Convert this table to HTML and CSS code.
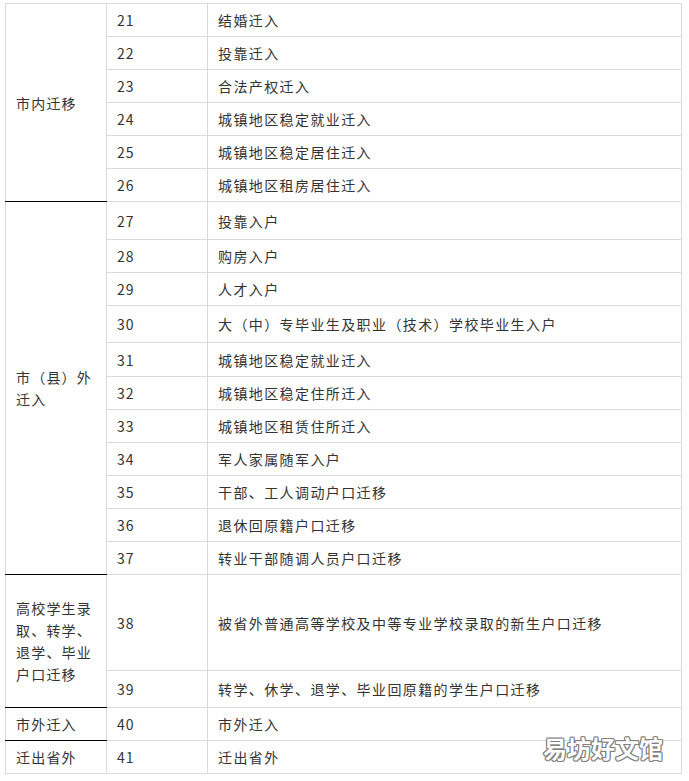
FILE: index.html
```
<!DOCTYPE html>
<html lang="zh">
<head>
<meta charset="utf-8">
<link rel="stylesheet" href="styles.css">
</head>
<body>
<div class="wrap">
<table class="tbl">
<colgroup><col class="c1"><col class="c2"><col class="c3"></colgroup>
<tr class="h33"><td class="cat grp" rowspan="6">市内迁移</td><td class="num">21</td><td>结婚迁入</td></tr>
<tr class="h33"><td class="num">22</td><td>投靠迁入</td></tr>
<tr class="h33"><td class="num">23</td><td>合法产权迁入</td></tr>
<tr class="h33"><td class="num">24</td><td>城镇地区稳定就业迁入</td></tr>
<tr class="h33"><td class="num">25</td><td>城镇地区稳定居住迁入</td></tr>
<tr class="h33"><td class="num">26</td><td>城镇地区租房居住迁入</td></tr>
<tr class="h38"><td class="cat grp" rowspan="11">市（县）外迁入</td><td class="num">27</td><td>投靠入户</td></tr>
<tr class="h33"><td class="num">28</td><td>购房入户</td></tr>
<tr class="h33"><td class="num">29</td><td>人才入户</td></tr>
<tr class="h37"><td class="num">30</td><td>大（中）专毕业生及职业（技术）学校毕业生入户</td></tr>
<tr class="h34"><td class="num">31</td><td>城镇地区稳定就业迁入</td></tr>
<tr class="h33"><td class="num">32</td><td>城镇地区稳定住所迁入</td></tr>
<tr class="h33"><td class="num">33</td><td>城镇地区租赁住所迁入</td></tr>
<tr class="h33"><td class="num">34</td><td>军人家属随军入户</td></tr>
<tr class="h33"><td class="num">35</td><td>干部、工人调动户口迁移</td></tr>
<tr class="h33"><td class="num">36</td><td>退休回原籍户口迁移</td></tr>
<tr class="h33"><td class="num">37</td><td>转业干部随调人员户口迁移</td></tr>
<tr class="h96"><td class="cat grp" rowspan="2">高校学生录取、转学、退学、毕业户口迁移</td><td class="num">38</td><td>被省外普通高等学校及中等专业学校录取的新生户口迁移</td></tr>
<tr class="h37"><td class="num">39</td><td>转学、休学、退学、毕业回原籍的学生户口迁移</td></tr>
<tr class="h33"><td class="cat grp">市外迁入</td><td class="num">40</td><td>市外迁入</td></tr>
<tr class="h33"><td class="cat">迁出省外</td><td class="num">41</td><td>迁出省外</td></tr>
</table>
<div class="mark">易坊好文馆</div>
</div>
</body>
</html>
```

FILE: styles.css
```
html, body {
  margin: 0;
  padding: 0;
  background: #ffffff;
}
body {
  font-family: "Noto Sans CJK SC", "Microsoft YaHei", sans-serif;
  color: #333333;
}
.wrap {
  position: relative;
  padding: 3px 0 0 5px;
  width: 684px;
  height: 778px;
}
.tbl {
  border-collapse: collapse;
  table-layout: fixed;
  width: 677px;
  font-size: 14px;
  letter-spacing: 1.4px;
}
.c1 { width: 101px; }
.c2 { width: 101px; }
.tbl td {
  border: 1px solid #dadada;
  padding: 0 10px;
  vertical-align: middle;
  line-height: 20px;
}
.tbl td.num {
  letter-spacing: 1px;
}
.tbl td.cat {
  letter-spacing: 1.2px;
  line-height: 22px;
  padding: 0 6px 0 10px;
}
.tbl td.grp {
  border-bottom: 1px solid #000000;
}
.h33 { height: 33px; }
.h34 { height: 34px; }
.h37 { height: 37px; }
.h38 { height: 38px; }
.h96 { height: 96px; }
.mark {
  position: absolute;
  left: 543px;
  top: 732px;
  font-size: 24px;
  font-weight: 700;
  color: #ffffff;
  letter-spacing: 0;
  line-height: 32px;
  text-shadow: 1px 0 0 #808080, -1px 0 0 #808080, 0 1px 0 #808080, 0 -1px 0 #808080,
    1px 1px 0 #8a8a8a, -1px -1px 0 #8a8a8a, 1px -1px 0 #8a8a8a, -1px 1px 0 #8a8a8a;
}
```
